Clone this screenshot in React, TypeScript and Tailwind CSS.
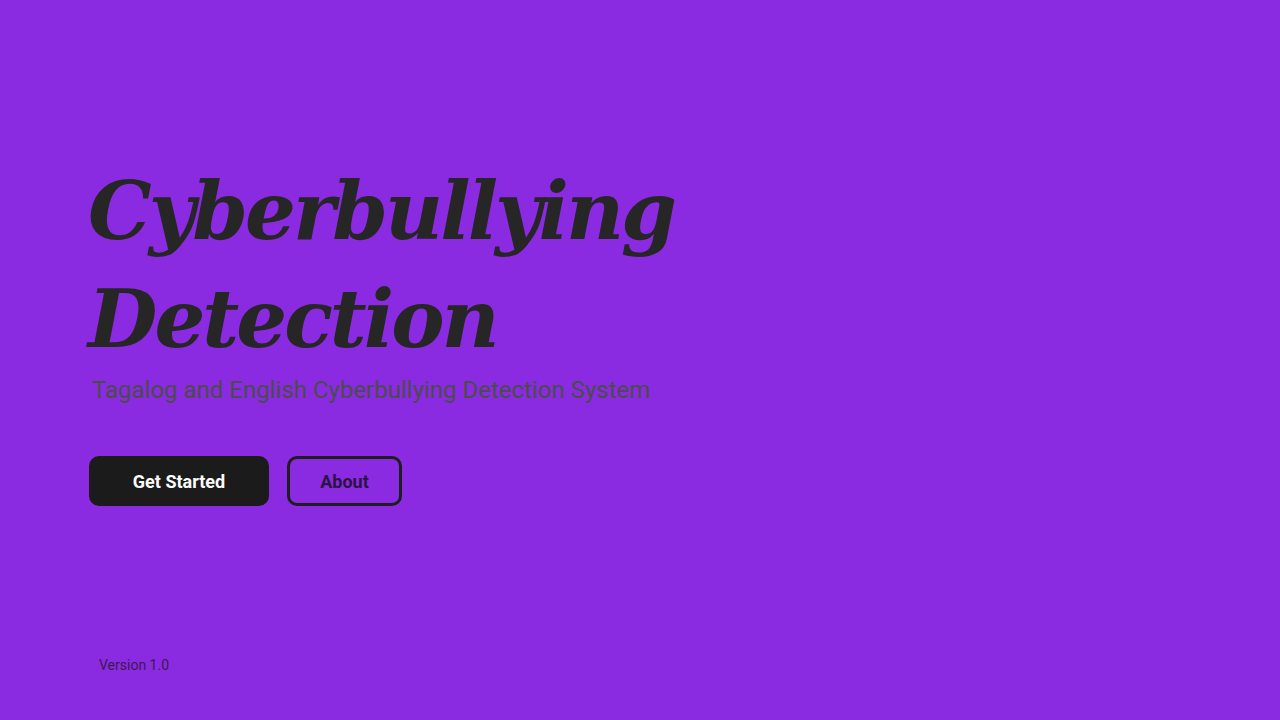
export default function App() {
  return (
    <main className="min-h-screen h-[720px] bg-[#8a2be2] flex flex-col pl-[88px] font-['Roboto',sans-serif]">
      <div className="flex-1 flex flex-col pt-[157px]">
        <h1 className="font-['DejaVu_Serif',serif] italic font-bold text-[#262626] text-[80px] leading-[108px] tracking-[-3px]">
          Cyberbullying
          <br />
          Detection
        </h1>
        <p className="ml-[4px] mt-[1px] text-[24px] leading-[32px] text-[#4b4b4b]">
          Tagalog and English Cyberbullying Detection System
        </p>
        <div className="mt-[50px] ml-[1px] flex gap-[18px]">
          <button className="w-[180px] h-[50px] rounded-[10px] bg-[#1b1b1b] text-white text-[18px] font-bold">
            Get Started
          </button>
          <button className="w-[115px] h-[50px] rounded-[10px] border-[3px] border-[#1e1e1e] text-[#2a1440] text-[18px] font-bold">
            About
          </button>
        </div>
      </div>
      <footer className="pl-[11px] pb-[44px] text-[14px] text-[#3a1a4f]">Version 1.0</footer>
    </main>
  );
}
